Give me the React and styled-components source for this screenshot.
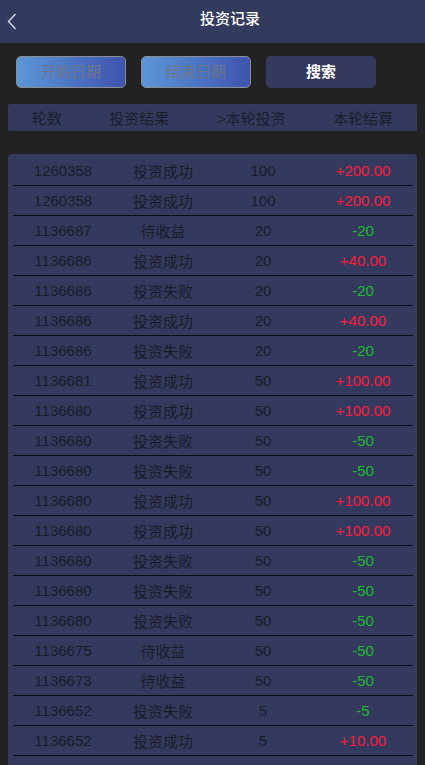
import React from "react";
import styled, { createGlobalStyle } from "styled-components";

const Global = createGlobalStyle`
  html, body { margin: 0; padding: 0; background: #222222; }
  body { font-family: "Liberation Sans", "Noto Sans CJK SC", sans-serif; overflow: hidden; }
  * { box-sizing: border-box; }
`;

const Page = styled.div`
  width: 425px;
  min-height: 765px;
  background: #222222;
`;

const TopBar = styled.header`
  height: 43px;
  background: #323a5e;
  position: relative;
  display: flex;
  justify-content: center;
  padding-left: 35px;
`;

const Back = styled.button`
  position: absolute;
  left: 4px;
  top: 10px;
  width: 16px;
  height: 22px;
  padding: 0;
  border: 0;
  background: transparent;
  display: flex;
  align-items: center;
  justify-content: center;
`;

const Title = styled.h1`
  margin: 0;
  font-size: 15px;
  font-weight: 500;
  line-height: 38px;
  color: #ffffff;
`;

const Filters = styled.div`
  display: flex;
  gap: 15px;
  padding: 13px 0 0 16px;
`;

const DateBtn = styled.button`
  width: 110px;
  height: 32px;
  border: 1px solid #8b8d94;
  border-radius: 5px;
  background: linear-gradient(90deg, #5d97d7 0%, #4a72c2 55%, #3e53ae 100%);
  color: #6f7588;
  font-family: inherit;
  font-size: 15px;
  padding: 0 0 4px;
`;

const SearchBtn = styled.button`
  width: 110px;
  height: 32px;
  border: 0;
  border-radius: 5px;
  background: #333a5e;
  color: #ffffff;
  font-family: inherit;
  font-size: 15px;
  font-weight: 700;
  padding: 0 0 3px;
`;

const HeadBar = styled.div`
  margin: 16px 8px 0;
  height: 27px;
  background: #333a5e;
  border-radius: 2px;
  display: flex;
  justify-content: space-around;
  align-items: center;
`;

const HeadCell = styled.span`
  font-size: 15px;
  color: #1c1e2c;
`;

const Table = styled.div`
  margin: 23px 8px 0;
  background: #333a5e;
  border-radius: 4px 4px 0 0;
  padding: 2px 4px 20px 5px;
`;

const Row = styled.div`
  display: grid;
  grid-template-columns: repeat(4, 1fr);
  height: 30px;
  border-bottom: 1px solid #0c0d14;
  align-items: center;
`;

const Cell = styled.span`
  text-align: center;
  font-size: 15px;
  color: ${(p) => (p.$tone === "up" ? "#ff1c3c" : p.$tone === "down" ? "#1dbb2e" : "#1a1c29")};
`;

const rows = [
  ["1260358", "投资成功", "100", "+200.00"],
  ["1260358", "投资成功", "100", "+200.00"],
  ["1136687", "待收益", "20", "-20"],
  ["1136686", "投资成功", "20", "+40.00"],
  ["1136686", "投资失败", "20", "-20"],
  ["1136686", "投资成功", "20", "+40.00"],
  ["1136686", "投资失败", "20", "-20"],
  ["1136681", "投资成功", "50", "+100.00"],
  ["1136680", "投资成功", "50", "+100.00"],
  ["1136680", "投资失败", "50", "-50"],
  ["1136680", "投资失败", "50", "-50"],
  ["1136680", "投资成功", "50", "+100.00"],
  ["1136680", "投资成功", "50", "+100.00"],
  ["1136680", "投资失败", "50", "-50"],
  ["1136680", "投资失败", "50", "-50"],
  ["1136680", "投资失败", "50", "-50"],
  ["1136675", "待收益", "50", "-50"],
  ["1136673", "待收益", "50", "-50"],
  ["1136652", "投资失败", "5", "-5"],
  ["1136652", "投资成功", "5", "+10.00"],
];

export default function App() {
  return (
    <Page>
      <Global />
      <TopBar>
        <Back aria-label="back">
          <svg width="10" height="17" viewBox="0 0 10 17">
            <polyline points="8.5,1 1.5,8.5 8.5,16" fill="none" stroke="#d8dae3" strokeWidth="1.4" />
          </svg>
        </Back>
        <Title>投资记录</Title>
      </TopBar>
      <Filters>
        <DateBtn>开始日期</DateBtn>
        <DateBtn>结束日期</DateBtn>
        <SearchBtn>搜索</SearchBtn>
      </Filters>
      <HeadBar>
        <HeadCell>轮数</HeadCell>
        <HeadCell>投资结果</HeadCell>
        <HeadCell>&gt;本轮投资</HeadCell>
        <HeadCell>本轮结算</HeadCell>
      </HeadBar>
      <Table>
        {rows.map((r, i) => (
          <Row key={i}>
            <Cell>{r[0]}</Cell>
            <Cell>{r[1]}</Cell>
            <Cell>{r[2]}</Cell>
            <Cell $tone={r[3].startsWith("+") ? "up" : "down"}>{r[3]}</Cell>
          </Row>
        ))}
      </Table>
    </Page>
  );
}
